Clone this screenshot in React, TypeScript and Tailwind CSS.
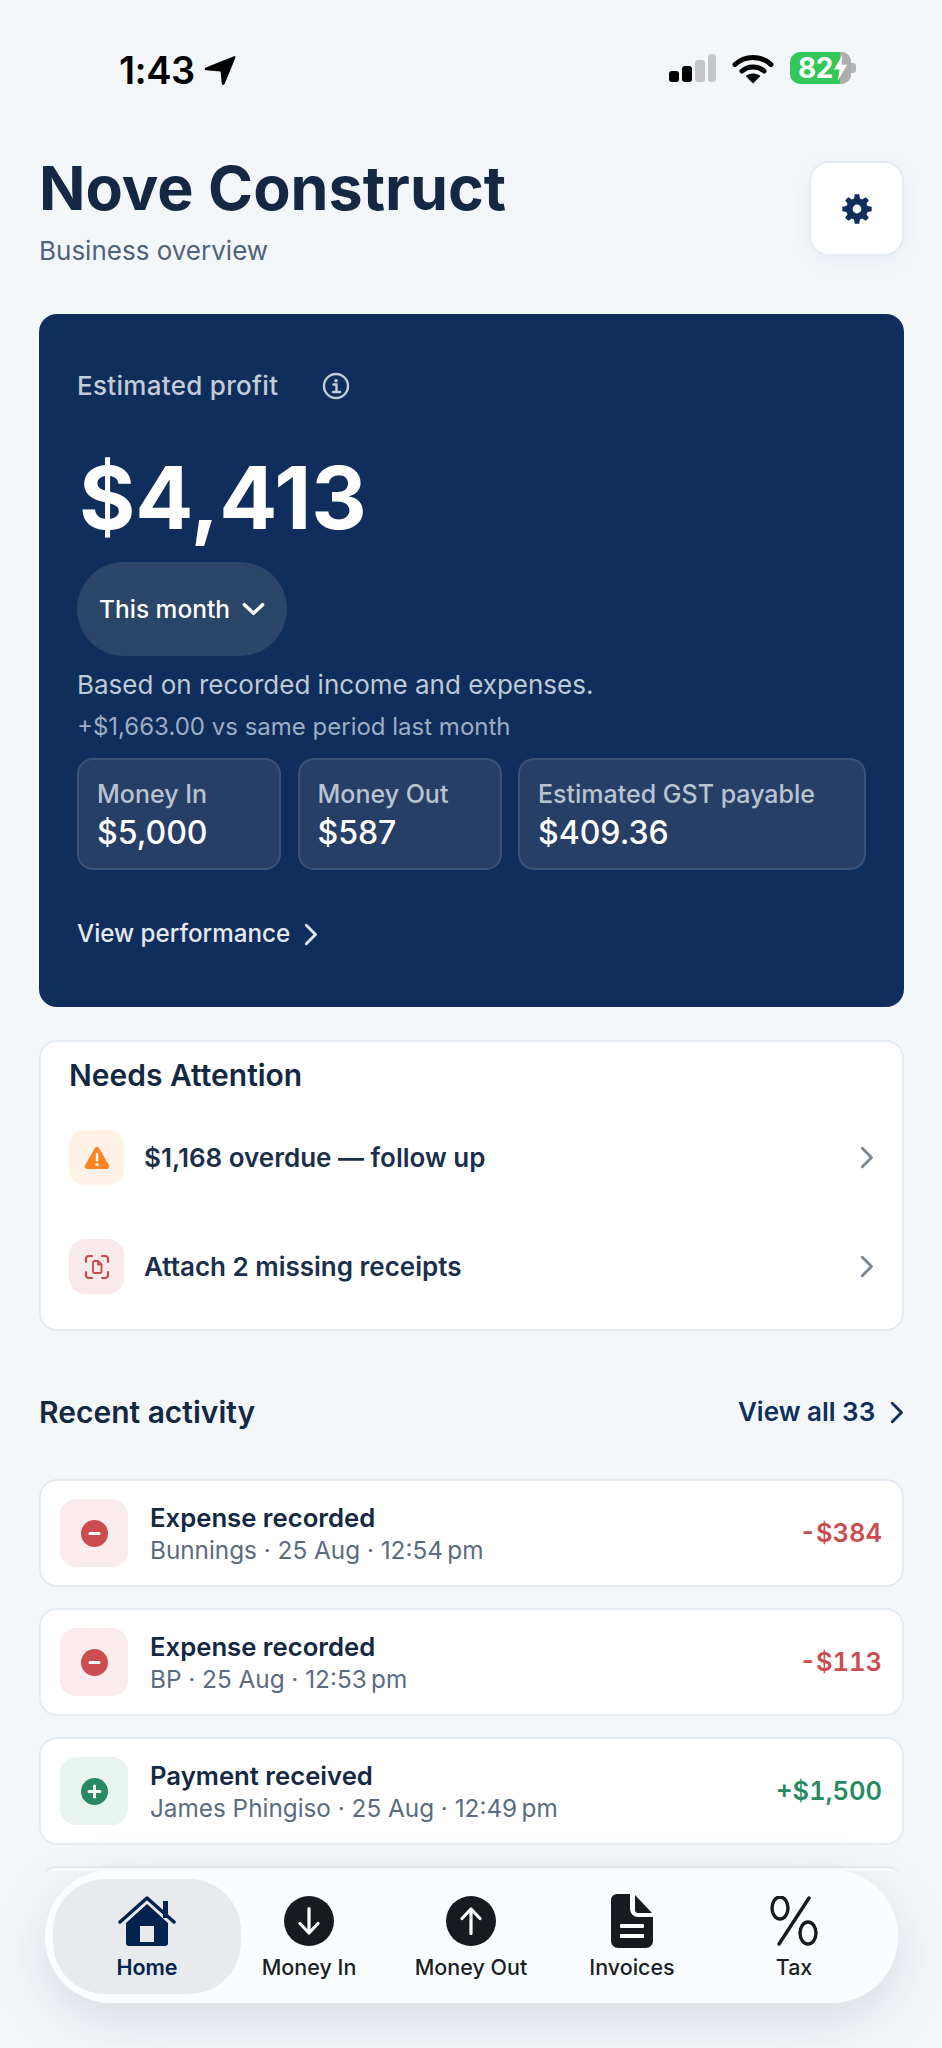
import React from "react";

function Chevron({ className = "", size = 23 }: { className?: string; size?: number }) {
  return (
    <svg width={(size * 12) / 20} height={size} viewBox="0 0 12 20" fill="none" className={className}>
      <path d="M2 2 L10 10 L2 18" stroke="currentColor" strokeWidth="2.500" strokeLinecap="round" strokeLinejoin="round" />
    </svg>
  );
}

function StatusBar() {
  return (
    <div className="flex h-[110px] items-start justify-between pl-[119px] pr-[86px] pt-[52px]">
      <div className="flex items-center gap-[9px]">
        <span className="text-[38px] font-semibold leading-[36px] tracking-[-0.5px] text-black">1:43</span>
        <svg width="32" height="31" viewBox="0 0 32 31"><path d="M30 1.200 C31 .8 31.800 1.600 31.400 2.800 L20.600 29 C19.800 30.600 18 30.400 17.800 28.600 L16.600 16.400 L2.200 15.200 C.4 15 .2 13.200 1.800 12.400 Z" fill="#000" /></svg>
      </div>
      <div className="flex items-start gap-[16px] pt-[1px]">
        <svg width="47" height="30" viewBox="0 0 47 30">
          <rect x="0" y="18" width="10" height="11" rx="3" fill="#000" />
          <rect x="13" y="13" width="10" height="16" rx="3" fill="#000" />
          <rect x="26" y="7" width="10" height="22" rx="3" fill="#c4c6c9" />
          <rect x="39" y="1" width="8" height="28" rx="3" fill="#c4c6c9" />
        </svg>
        <svg width="42" height="31" viewBox="0 0 42 31" fill="none">
          <path d="M3 11.500 C13 2 29 2 39 11.500" stroke="#000" strokeWidth="5" strokeLinecap="round" />
          <path d="M10 18 C16 12.500 26 12.500 32 18" stroke="#000" strokeWidth="5" strokeLinecap="round" />
          <path d="M21 30.500 L13.500 23 C18 19.500 24 19.500 28.500 23 Z" fill="#000" />
        </svg>
        <div className="relative -mt-[1px] flex h-[32px] w-[61px] items-center rounded-[10px] bg-[#34c759] pl-[8px]">
          <div className="absolute bottom-0 right-0 top-0 w-[11px] rounded-r-[10px] bg-[#adadb0]" />
          <span className="relative text-[28px] font-bold leading-[32px] tracking-[-0.5px] text-white">82</span>
          <svg width="15" height="26" viewBox="0 0 16 27" className="absolute right-[3px] top-[3px]"><path d="M10 0 L1 15 H7 L5 27 L15 10 H9 Z" fill="#fff" /></svg>
        </div>
        <div className="-ml-[16px] mt-[10px] h-[10px] w-[5px] rounded-r-[3px] bg-[#b4b4b7]" />
      </div>
    </div>
  );
}

function Header() {
  return (
    <div className="flex items-start justify-between pl-[39px] pr-[38px] pt-[48px]">
      <div>
        <h1 className="text-[61px] font-bold leading-[60px] text-[#142843]">Nove Construct</h1>
        <p className="mt-[17px] text-[26px] leading-[32px] text-[#50617a]">Business overview</p>
      </div>
      <div className="mt-[3px] flex h-[95px] w-[95px] items-center justify-center rounded-[20px] border-2 border-[#e6ebf1] bg-white shadow-[0_6px_20px_rgba(15,46,91,0.05)]">
        <svg width="32" height="32" viewBox="0 0 24 24" fill="#0f2e5b">
          <path fillRule="evenodd" d="M10.300 1h3.400l.5 3.100c.6.2 1.200.5 1.700.8l2.600-1.800 2.400 2.400-1.800 2.600c.3.6.6 1.100.8 1.700l3.100.5v3.400l-3.100.5c-.2.6-.5 1.200-.8 1.700l1.800 2.600-2.400 2.400-2.600-1.800c-.5.3-1.100.6-1.700.8l-.5 3.100h-3.400l-.5-3.100c-.6-.2-1.200-.5-1.700-.8l-2.600 1.800-2.400-2.400 1.800-2.600c-.3-.5-.6-1.100-.8-1.700L1 13.700v-3.400l3.100-.5c.2-.6.5-1.100.8-1.700L3.100 5.500l2.400-2.400 2.600 1.800c.5-.3 1.100-.6 1.700-.8L10.300 1zM12 8.700a3.300 3.300 0 1 0 0 6.600 3.300 3.300 0 0 0 0-6.600z" />
        </svg>
      </div>
    </div>
  );
}

function Stat({ label, value, className }: { label: string; value: string; className: string }) {
  return (
    <div className={`h-[112px] rounded-[16px] border-2 border-[#3a5275] bg-[#273f66] pl-[18px] pt-[18px] ${className}`}>
      <div className="text-[25px] font-medium leading-[32px] text-[#b9c3d2]">{label}</div>
      <div className="mt-[4px] text-[32px] font-medium leading-[38px] text-white">{value}</div>
    </div>
  );
}

function ProfitCard() {
  return (
    <div className="ml-[39px] mr-[38px] mt-[47px] h-[693px] rounded-[18px] bg-[#0f2e5b] pl-[38px] pr-[38px] pt-[54px]">
      <div className="flex items-center gap-[44px]">
        <span className="text-[26px] font-medium leading-[36px] tracking-[0.3px] text-[#c3ccd9]">Estimated profit</span>
        <svg width="28" height="28" viewBox="0 0 28 28" fill="none">
          <circle cx="14" cy="14" r="12" stroke="#c3ccd9" strokeWidth="2.400" />
          <circle cx="14" cy="8.700" r="1.800" fill="#c3ccd9" />
          <path d="M11.500 12.500H14.500V19.500M11 20H18" stroke="#c3ccd9" strokeWidth="2.400" strokeLinecap="round" />
        </svg>
      </div>
      <div className="mt-[44px] pl-[2px] text-[86px] font-bold leading-[100px] text-white">$4,413</div>
      <div className="mt-[14px] flex h-[94px] w-[210px] items-center justify-center gap-[12px] rounded-[47px] bg-[#2c4669]">
        <span className="text-[24.500px] font-medium text-white">This month</span>
        <svg width="23" height="14" viewBox="0 0 24 14" fill="none"><path d="M2.500 2.500 L12 11.500 L21.500 2.500" stroke="#fff" strokeWidth="3.600" strokeLinecap="round" strokeLinejoin="round" /></svg>
      </div>
      <p className="mt-[11px] text-[26px] leading-[36px] text-[#bfc9d8]">Based on recorded income and expenses.</p>
      <p className="mt-[8px] text-[24px] leading-[32px] text-[#9dadc3]">+$1,663.00 vs same period last month</p>
      <div className="mt-[15px] flex gap-[16.500px]">
        <Stat label="Money In" value="$5,000" className="w-[204px]" />
        <Stat label="Money Out" value="$587" className="w-[204px]" />
        <Stat label="Estimated GST payable" value="$409.36" className="w-[348px]" />
      </div>
      <div className="mt-[46px] flex items-center gap-[14px]">
        <span className="text-[24.200px] font-medium leading-[36px] text-[#e5e9ef]">View performance</span>
        <Chevron className="text-[#e5e9ef]" />
      </div>
    </div>
  );
}

function AttentionRow({ bg, icon, text, className }: { bg: string; icon: React.ReactNode; text: string; className: string }) {
  return (
    <div className={`flex h-[55px] items-center ${className}`}>
      <div className={`flex h-[55px] w-[55px] items-center justify-center rounded-[16px] ${bg}`}>{icon}</div>
      <span className="ml-[20px] flex-1 text-[26px] font-semibold text-[#1b2f4b]">{text}</span>
      <Chevron className="text-[#7b8794]" />
    </div>
  );
}

function Attention() {
  return (
    <div className="ml-[39px] mr-[38px] mt-[33px] h-[291px] rounded-[18px] border-2 border-[#e6ebf1] bg-white px-[28px] pt-[14px]">
      <h2 className="text-[30px] font-semibold leading-[38px] text-[#142843]">Needs Attention</h2>
      <AttentionRow
        className="mt-[36px]"
        bg="bg-[#fef1e6]"
        text="$1,168 overdue — follow up"
        icon={
          <svg width="26" height="24" viewBox="0 0 26 24">
            <path d="M10.800 2.200 C11.800 .5 14.200 .5 15.200 2.200 L24.800 19 C25.800 20.800 24.600 23 22.500 23 H3.500 C1.400 23 .2 20.800 1.200 19 Z" fill="#fd8524" />
            <rect x="11.800" y="7" width="2.400" height="8.500" rx="1.200" fill="#fff" />
            <circle cx="13" cy="18.500" r="1.600" fill="#fff" />
          </svg>
        }
      />
      <AttentionRow
        className="mt-[54px]"
        bg="bg-[#f8eaea]"
        text="Attach 2 missing receipts"
        icon={
          <svg width="26" height="26" viewBox="0 0 26 26" fill="none" stroke="#c94c4c" strokeWidth="2.200" strokeLinecap="round" strokeLinejoin="round">
            <path d="M2 8V5a3 3 0 0 1 3-3h3M18 2h3a3 3 0 0 1 3 3v3M24 18v3a3 3 0 0 1-3 3h-3M8 24H5a3 3 0 0 1-3-3v-3" />
            <path d="M9 8.500a1.500 1.500 0 0 1 1.500-1.500H14l3.500 3.500v7a1.500 1.500 0 0 1-1.500 1.500h-5.500A1.500 1.500 0 0 1 9 17.500z" strokeWidth="1.800" />
            <path d="M14 7v3.500h3.500" strokeWidth="1.800" />
          </svg>
        }
      />
    </div>
  );
}

function Activity({ kind, title, sub, amount, first }: { kind: "out" | "in"; title: string; sub: string; amount: string; first?: boolean }) {
  const out = kind === "out";
  return (
    <div className={`ml-[39px] mr-[38px] flex h-[108px] items-center rounded-[18px] border-2 border-[#e6ebf1] bg-white pl-[19px] pr-[20px] ${first ? "mt-[48px]" : "mt-[21px]"}`}>
      <div className={`flex h-[68px] w-[68px] items-center justify-center rounded-[16px] ${out ? "bg-[#faeced]" : "bg-[#e9f3ef]"}`}>
        <svg width="27" height="27" viewBox="0 0 27 27">
          <circle cx="13.500" cy="13.500" r="13.500" fill={out ? "#cc4d50" : "#288a63"} />
          {out ? (
            <rect x="7.500" y="12" width="12" height="3" rx="1.500" fill="#fff" />
          ) : (
            <path d="M13.500 8v11M8 13.500h11" stroke="#fff" strokeWidth="3" strokeLinecap="round" />
          )}
        </svg>
      </div>
      <div className="ml-[22px] flex-1 pt-[2px]">
        <div className="text-[25.700px] font-semibold leading-[33px] text-[#142843]">{title}</div>
        <div className="text-[24.300px] leading-[33px] text-[#5b6b80]">{sub}</div>
      </div>
      <div className={`text-[25.500px] font-semibold tabular-nums ${out ? "text-[#c94c4f]" : "text-[#288a63]"}`}>{amount}</div>
    </div>
  );
}

function Recent() {
  return (
    <>
      <div className="ml-[39px] mr-[38px] mt-[62px] flex items-center justify-between">
        <h2 className="text-[30px] font-semibold leading-[38px] text-[#142843]">Recent activity</h2>
        <div className="flex items-center gap-[15px]">
          <span className="text-[26px] font-semibold leading-[38px] text-[#0f2e5b]">View all 33</span>
          <Chevron className="text-[#0f2e5b]" />
        </div>
      </div>
      <Activity first kind="out" title="Expense recorded" sub={"Bunnings · 25 Aug · 12:54\u202fpm"} amount="-$384" />
      <Activity kind="out" title="Expense recorded" sub={"BP · 25 Aug · 12:53\u202fpm"} amount="-$113" />
      <Activity kind="in" title="Payment received" sub={"James Phingiso · 25 Aug · 12:49\u202fpm"} amount="+$1,500" />
      <div className="ml-[39px] mr-[38px] mt-[21px] h-[5px] overflow-hidden">
        <div className="h-[108px] rounded-[18px] border-2 border-[#e6ebf1] bg-white" />
      </div>
    </>
  );
}

function NavItem({ label, icon, active, className }: { label: string; icon: React.ReactNode; active?: boolean; className: string }) {
  return (
    <div className={`flex h-[115px] flex-col items-center pt-[14px] ${className} ${active ? "rounded-[52px] bg-[#e8eaee]" : ""}`}>
      <div className="flex h-[56px] items-center justify-center">{icon}</div>
      <div className={`mt-[3px] text-[21.500px] font-medium leading-[30px] ${active ? "font-semibold text-[#03234f]" : "text-[#1b1f23]"}`}>{label}</div>
    </div>
  );
}

function BottomNav() {
  return (
    <div className="absolute bottom-0 left-0 right-0 h-[178px]">
      <div className="absolute left-[45px] right-[44px] top-0 flex h-[133px] items-center rounded-[66px] bg-[#fafdff] pl-[8px] shadow-[0_16px_60px_rgba(10,20,30,0.12)]">
        <NavItem
          active
          className="w-[188px]"
          label="Home"
          icon={
            <svg width="58" height="51" viewBox="0 0 58 51">
              <path d="M2 26 L29 2 L56 26" stroke="#03234f" strokeWidth="3.500" strokeLinecap="round" strokeLinejoin="round" fill="none" />
              <rect x="45" y="5" width="5" height="17" fill="#03234f" />
              <path fillRule="evenodd" d="M29 8 L50 27 V47 a3 3 0 0 1 -3 3 H11 a3 3 0 0 1 -3 -3 V27 Z M22 30 V46 H36 V30 Z" fill="#03234f" />
            </svg>
          }
        />
        <NavItem
          className="w-[136px]"
          label="Money In"
          icon={
            <svg width="50" height="50" viewBox="0 0 50 50">
              <circle cx="25" cy="25" r="25" fill="#171b1f" />
              <path d="M25 12.500V36M16 27.500 L25 37 L34 27.500" stroke="#fff" strokeWidth="3.200" strokeLinecap="round" strokeLinejoin="round" fill="none" />
            </svg>
          }
        />
        <NavItem
          className="w-[188px]"
          label="Money Out"
          icon={
            <svg width="50" height="50" viewBox="0 0 50 50">
              <circle cx="25" cy="25" r="25" fill="#171b1f" />
              <path d="M25 37.500V14M16 22.500 L25 13 L34 22.500" stroke="#fff" strokeWidth="3.200" strokeLinecap="round" strokeLinejoin="round" fill="none" />
            </svg>
          }
        />
        <NavItem
          className="w-[134px]"
          label="Invoices"
          icon={
            <svg width="42" height="54" viewBox="0 0 42 54">
              <path d="M6 0 H19 V15 A8 8 0 0 0 27 23 H42 V47 A7 7 0 0 1 35 54 H7 A7 7 0 0 1 0 47 V6 A6 6 0 0 1 6 0Z" fill="#171b1f" />
              <path d="M24 1 L41 19 H27 A3 3 0 0 1 24 16Z" fill="#171b1f" />
              <rect x="9" y="30" width="24" height="4" rx="1" fill="#fff" />
              <rect x="9" y="40" width="24" height="4" rx="1" fill="#fff" />
            </svg>
          }
        />
        <NavItem
          className="w-[190px]"
          label="Tax"
          icon={
            <svg width="50" height="50" viewBox="0 0 50 50" fill="none" stroke="#171b1f" strokeWidth="3.400" strokeLinecap="round">
              <ellipse cx="11" cy="12" rx="8" ry="11" />
              <ellipse cx="39" cy="37" rx="8" ry="11" />
              <path d="M40 2 L10 48" />
            </svg>
          }
        />
      </div>
    </div>
  );
}

export default function App() {
  return (
    <div className="relative h-[2048px] w-[942px] overflow-hidden bg-[#f4f7fa] font-['Inter',sans-serif]">
      <StatusBar />
      <Header />
      <ProfitCard />
      <Attention />
      <Recent />
      <BottomNav />
    </div>
  );
}
